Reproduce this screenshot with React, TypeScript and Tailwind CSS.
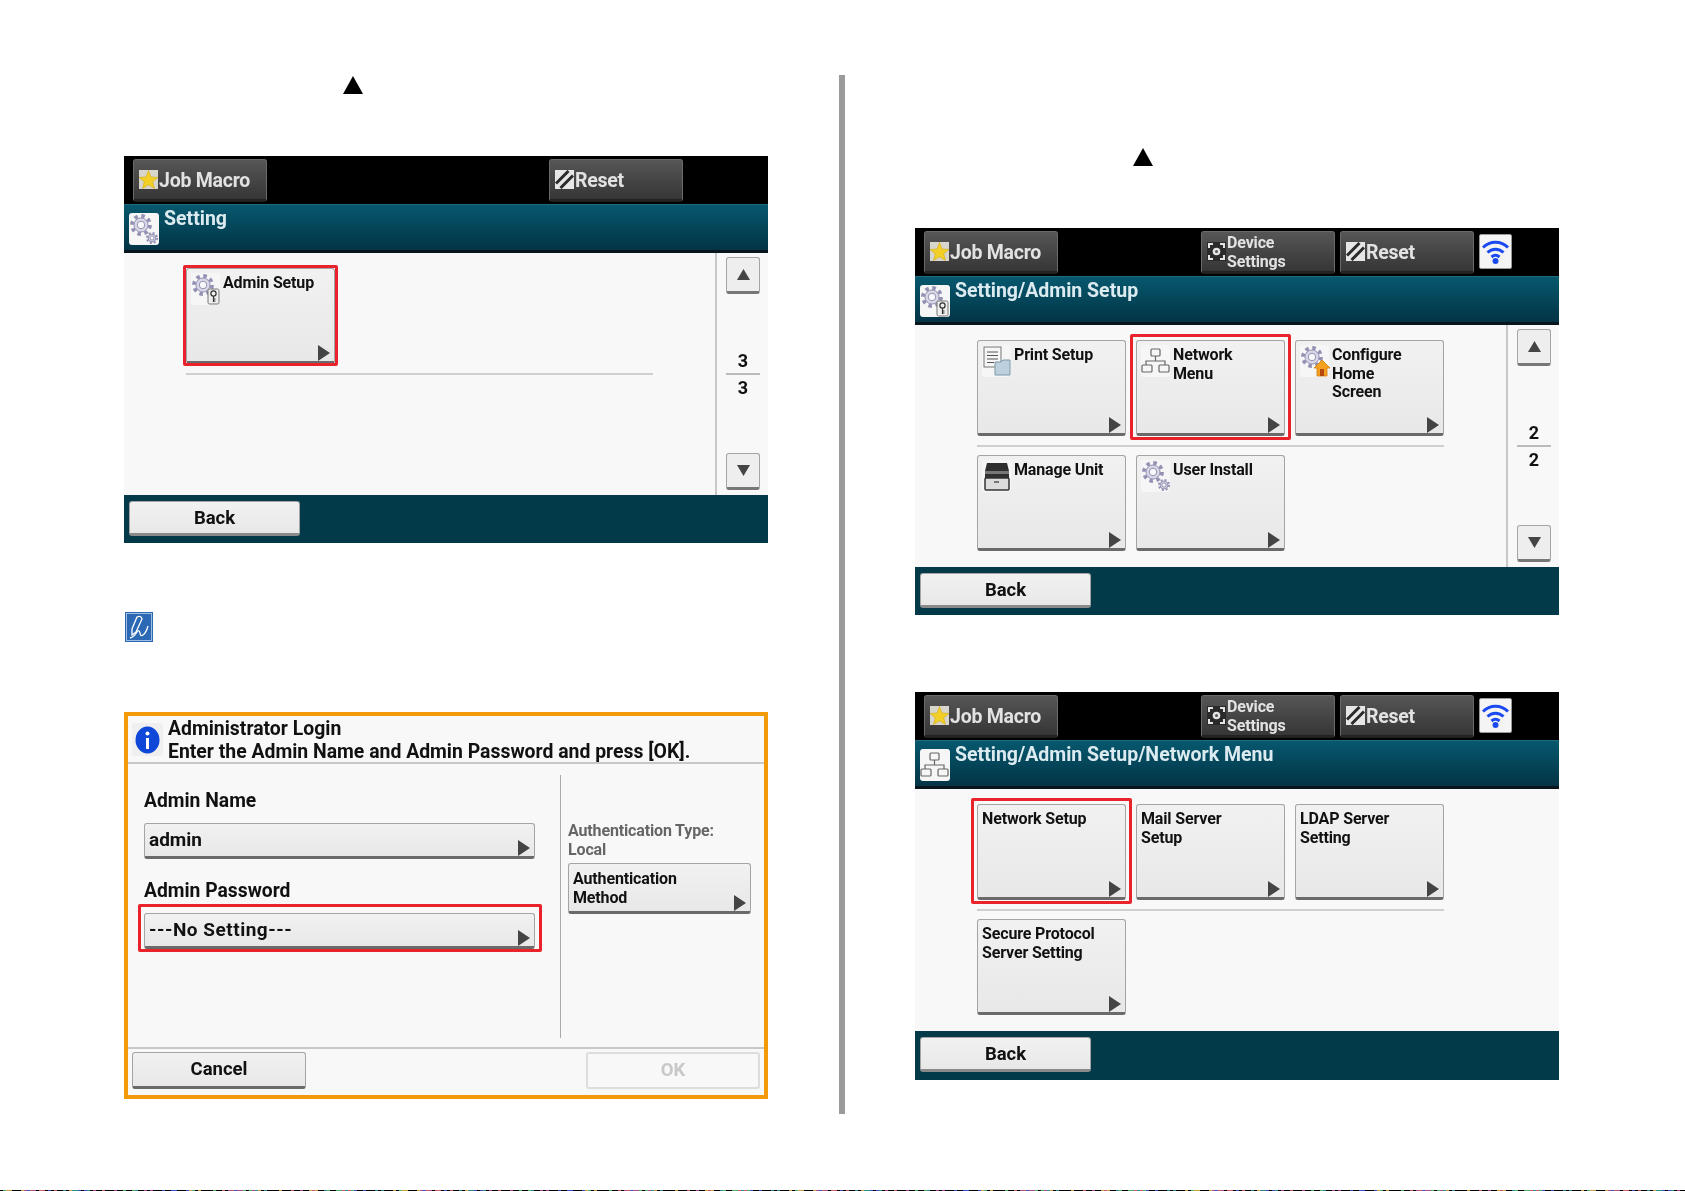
import React from 'react';

const Arrow = () => (
  <svg className="absolute right-[3px] bottom-0" width="14" height="16" viewBox="0 0 14 16">
    <polygon points="1,0 13,8 1,16" fill="#444" />
  </svg>
);

const Gear = ({ cx, cy, r, color = '#9492b4' }: { cx: number; cy: number; r: number; color?: string }) => {
  const tooth = (2 * Math.PI * r) / 16;
  return (
    <g>
      <circle cx={cx} cy={cy} r={r} fill="none" stroke={color} strokeWidth={r * 0.42} strokeDasharray={`${tooth} ${tooth}`} />
      <circle cx={cx} cy={cy} r={r * 0.78} fill="#d9d8e6" stroke={color} strokeWidth="1" />
      <circle cx={cx} cy={cy} r={r * 0.42} fill="#f8f8fa" stroke={color} strokeWidth="1" />
    </g>
  );
};

const KeyBadge = () => (
  <g>
    <rect x="17" y="16" width="11" height="15" rx="1.5" fill="#eee" stroke="#777" />
    <circle cx="22.5" cy="20.5" r="2.6" fill="none" stroke="#333" strokeWidth="1.2" />
    <path d="M22.5 23v6m0-3h2m-2 2h2" stroke="#333" strokeWidth="1.2" fill="none" />
  </g>
);

const NetworkGlyph = () => (
  <g fill="none" stroke="#666" strokeWidth="1.2">
    <rect x="10" y="4" width="9" height="7" rx="1" />
    <path d="M14.500 11v5M5 20v-4h19v4" />
    <rect x="1" y="20" width="10" height="7" rx="1" />
    <rect x="18" y="20" width="10" height="7" rx="1" />
  </g>
);

const tileIcons: Record<string, React.ReactNode> = {
  gears: (
    <>
      <Gear cx={12} cy={12} r={9} />
      <Gear cx={23} cy={25} r={5} />
    </>
  ),
  adminSetup: (
    <>
      <Gear cx={12} cy={12} r={9} />
      <KeyBadge />
    </>
  ),
  network: <NetworkGlyph />,
  print: (
    <>
      <rect x="2" y="2" width="17" height="20" fill="#f6f6f6" stroke="#777" />
      <path d="M5 7h11M5 10.500h11M5 14h11M5 17.500h7" stroke="#555" strokeWidth="1.2" />
      <path d="M13 17h6l2-2h7v15H13z" fill="#bcd0dd" stroke="#7d98a8" />
    </>
  ),
  manage: (
    <>
      <path d="M5 3h20l2 8v9H3v-9z" fill="#2f2f2f" />
      <rect x="3" y="11" width="24" height="3" fill="#777" />
      <rect x="3" y="18" width="24" height="12" rx="1" fill="#dcdcdc" stroke="#333" strokeWidth="1.5" />
      <rect x="12" y="21" width="5" height="2" fill="#777" />
    </>
  ),
  home: (
    <>
      <Gear cx={12} cy={12} r={9} />
      <path d="M14 23l8-8 8 8h-3v8H17v-8z" fill="#f4a11f" stroke="#d07f10" strokeWidth="0.8" />
      <rect x="20" y="24" width="4" height="7" fill="#b5480f" />
    </>
  ),
  userInstall: (
    <>
      <Gear cx={12} cy={12} r={9} />
      <Gear cx={23} cy={25} r={5} />
    </>
  ),
};

const TileIcon = ({ name }: { name: string }) => (
  <div className="w-[29px] h-[32px] shrink-0 rounded-[3px] bg-[#f6f6f6]">
    <svg width="30" height="33" viewBox="0 0 30 33">{tileIcons[name]}</svg>
  </div>
);

const StarIcon = () => (
  <svg width="19" height="19" viewBox="0 0 19 19" className="shrink-0">
    <rect width="19" height="19" fill="#d8d6cc" />
    <polygon points="9.500,0.500 12,7 19,7.400 13.700,11.700 15.500,18.500 9.500,14.800 3.500,18.500 5.300,11.700 0,7.400 7,7" fill="#f2d027" stroke="#d2a912" strokeWidth="0.6" />
  </svg>
);

const ResetIcon = () => (
  <svg width="19" height="19" viewBox="0 0 19 19" className="shrink-0">
    <rect width="19" height="19" fill="#e6e6e6" />
    <path d="M1 13.500L13.500 1M5.500 18L18 5.500" stroke="#2a2a2a" strokeWidth="3" />
  </svg>
);

const DeviceIcon = () => (
  <svg width="19" height="19" viewBox="0 0 19 19" className="shrink-0">
    <rect width="19" height="19" fill="#2a2a2a" />
    <path d="M2 6V2h4M13 2h4v4M17 13v4h-4M6 17H2v-4" stroke="#e4e4e4" strokeWidth="2" fill="none" />
    <circle cx="9.500" cy="9.500" r="3.800" fill="#e4e4e4" />
    <circle cx="9.500" cy="9.500" r="1.500" fill="#555" />
  </svg>
);

const WifiIcon = () => (
  <div className="w-[33px] h-[35px] mt-[3px] ml-[5px] rounded-[2px] bg-[#f4f4f4] border border-[#999]">
    <svg width="31" height="33" viewBox="0 0 31 33">
      <path d="M3 12.500C10 5.500 21 5.500 28 12.500M7.500 17.500C12 13 19 13 23.500 17.500M11.500 22C14 19.800 17 19.800 19.500 22" stroke="#1a49f0" strokeWidth="3" fill="none" />
      <circle cx="15.500" cy="26" r="3" fill="#1a49f0" />
    </svg>
  </div>
);

const DarkButton = ({ icon, children, className = '' }: { icon: React.ReactNode; children: React.ReactNode; className?: string }) => (
  <div className={`w-[134px] h-[43px] flex items-center gap-[1px] pl-[5px] rounded-[3px] border border-[#6a6a6a] border-b-[3px] border-b-[#222] bg-linear-to-b from-[#565656] to-[#363636] text-[#e2e2e2] font-bold ${className}`}>
    {icon}
    {children}
  </div>
);

const LightButton = ({ children, className = '' }: { children: React.ReactNode; className?: string }) => (
  <div className={`relative flex rounded-[3px] border border-[#a4a4a4] border-b-[3px] border-b-[#6a6a6a] bg-linear-to-b from-[#f1f1f1] to-[#e8e8e8] text-[#111] font-bold ${className}`}>
    {children}
  </div>
);

type TileData = { label: string[]; icon?: string; red?: 'wide' | 'tight' };

const Tile = ({ label, icon, red }: TileData) => (
  <LightButton className="w-[149px] h-[96px] text-[16px] leading-[18.500px] tracking-[-0.15px]">
    {icon ? (
      <div className="flex gap-[3px] pl-[4px] pt-[4px]">
        <TileIcon name={icon} />
        <div className="pt-[1px]">{label.map((l) => <div key={l}>{l}</div>)}</div>
      </div>
    ) : (
      <div className="pl-[4px] pt-[5px]">{label.map((l) => <div key={l}>{l}</div>)}</div>
    )}
    <Arrow />
    {red === 'wide' && <span className="absolute -left-[7px] -top-[7px] -right-[7px] -bottom-[7px] border-[3px] border-[#e8232c] rounded-[2px]" />}
    {red === 'tight' && <span className="absolute -left-[4px] -top-[4px] -right-[4px] -bottom-[5px] border-[3px] border-[#e8232c] rounded-[2px]" />}
  </LightButton>
);

const ScrollButton = ({ up }: { up?: boolean }) => (
  <div className="w-[34px] h-[37px] flex items-center justify-center rounded-[3px] border border-[#a4a4a4] border-b-[3px] border-b-[#777] bg-[#eeeeee]">
    <svg width="13" height="11" viewBox="0 0 13 11">
      <polygon points={up ? '6.500,0 13,11 0,11' : '0,0 13,0 6.500,11'} fill="#444" />
    </svg>
  </div>
);

const Screen = ({ title, icon, wide, page, tall, rows }: { title: string; icon: string; wide?: boolean; page?: string; tall?: boolean; rows: TileData[][] }) => (
  <div className={`w-[644px] flex flex-col blur-[0.6px] ${tall ? 'h-[388px]' : 'h-[387px]'}`}>
    <div className="h-[48px] bg-black flex pl-[9px] pt-[3px] text-[19.500px] tracking-[-0.25px]">
      <DarkButton icon={<StarIcon />}><span className="pt-[2px]">Job Macro</span></DarkButton>
      {wide ? (
        <DarkButton icon={<DeviceIcon />} className="ml-[143px] text-[16px] leading-[18.500px] tracking-[-0.15px]">
          <div className="pt-[2px]">
            <div>Device</div>
            <div>Settings</div>
          </div>
        </DarkButton>
      ) : (
        <div className="w-[134px] ml-[143px]" />
      )}
      <DarkButton icon={<ResetIcon />} className="ml-[5px]"><span className="pt-[2px]">Reset</span></DarkButton>
      {wide && <WifiIcon />}
    </div>
    <div className="h-[49px] flex gap-[5px] pl-[5px] pt-[8px] border-t border-[#1d6a7e] border-b-[3px] border-b-[#06161c] bg-linear-to-b from-[#07586e] to-[#033446] text-[#dcebf0] text-[19.500px] leading-[18px] font-bold">
      <div className="w-[30px] h-[32px] shrink-0 rounded-[3px] bg-[#f6f6f6]">
        <svg width="30" height="33" viewBox="0 0 30 33">{tileIcons[icon]}</svg>
      </div>
      <div className="-mt-[3px]">{title}</div>
    </div>
    <div className="h-[242px] flex bg-[#f8f8f8] text-[#111]">
      <div className="w-[591px] pl-[62px] pt-[15px]">
        {rows.map((row, i) => (
          <div key={i}>
            <div className="flex gap-[10px]">
              {row.map((t) => <Tile key={t.label.join()} {...t} />)}
            </div>
            {i === 0 && <div className="w-[467px] h-[2px] mt-[9px] mb-[8px] bg-[#cfcfcf]" />}
          </div>
        ))}
      </div>
      {page && (
        <div className="w-[53px] border-l-2 border-[#c8c8c8] flex flex-col items-center justify-between pl-[1px] pt-[4px] pb-[5px]">
          <ScrollButton up />
          <div className="w-[34px] flex flex-col items-center text-[18px] leading-[25px] font-bold">
            <div className="w-full text-center border-b-2 border-[#bbb]">{page}</div>
            <div>{page}</div>
          </div>
          <ScrollButton />
        </div>
      )}
    </div>
    <div className="flex-1 bg-[#033a4a] pl-[5px] pt-[6px]">
      <LightButton className="w-[171px] h-[35px] items-center justify-center pt-[3px] text-[18.500px] !border-b-[#8a8a8a]">Back</LightButton>
    </div>
  </div>
);

const NoteIcon = () => (
  <svg width="28" height="30" viewBox="0 0 28 30" className="ml-px mt-[69px] blur-[0.3px]">
    <rect width="28" height="30" fill="#2b69b5" />
    <rect x="1.500" y="1.500" width="25" height="27" fill="none" stroke="#bcd2ec" strokeWidth="0.800" />
    <path d="M12 5Q16 3 17 7L11 20L7 23L7 17Z" stroke="#fff" strokeWidth="1.300" fill="none" />
    <path d="M5 26Q9 25 12 20Q14 17 15 21Q15.500 25 18 23Q21 21 23 14" stroke="#fff" strokeWidth="1.300" fill="none" />
  </svg>
);

const LoginField = ({ children }: { children: React.ReactNode }) => (
  <LightButton className="w-[391px] h-[36px] items-center pl-[4px] text-[19px]">
    {children}
    <Arrow />
  </LightButton>
);

const LoginDialog = () => (
  <div className="w-[644px] h-[387px] mt-[70px] flex flex-col border-4 border-[#f39a0a] bg-[#f8f8f8] text-[#111] font-bold blur-[0.6px]">
    <div className="h-[48px] shrink-0 flex gap-[5px] pl-[4px] border-b-2 border-[#c8c8c8] text-[19.400px] leading-[22.500px]">
      <div className="w-[31px] h-[33px] mt-[7px] shrink-0 rounded-[3px] bg-[#efefef] flex items-center justify-center">
        <svg width="25" height="28" viewBox="0 0 25 28">
          <ellipse cx="12.500" cy="14" rx="12" ry="13.500" fill="#0f47d8" />
          <rect x="11" y="12" width="3" height="11" fill="#fff" />
          <circle cx="12.500" cy="7.500" r="2" fill="#fff" />
        </svg>
      </div>
      <div className="pt-[2px]">
        <div>Administrator Login</div>
        <div>Enter the Admin Name and Admin Password and press [OK].</div>
      </div>
    </div>
    <div className="flex-1 flex">
      <div className="w-[432px] pl-[16px] pt-[26px] text-[19.300px] leading-[22px]">
        <div>Admin Name</div>
        <div className="mt-[11px]"><LoginField>admin</LoginField></div>
        <div className="mt-[21px]">Admin Password</div>
        <div className="relative mt-[11px] w-[391px]">
          <LoginField><span className="tracking-[0.5px]">---No Setting---</span></LoginField>
          <span className="absolute -left-[6px] -top-[9px] -right-[7px] -bottom-[3px] border-[3px] border-[#e8232c] rounded-[2px]" />
        </div>
      </div>
      <div className="mt-[11px] mb-[9px] w-px bg-[#aaa]" />
      <div className="pl-[7px] pt-[58px]">
        <div className="text-[16px] leading-[18.500px] tracking-[-0.15px] text-[#666]">
          <div>Authentication Type:</div>
          <div>Local</div>
        </div>
        <LightButton className="w-[183px] h-[51px] mt-[4px] pl-[4px] pt-[6px] text-[16px] leading-[18.500px] tracking-[-0.15px]">
          <div>
            <div>Authentication</div>
            <div>Method</div>
          </div>
          <Arrow />
        </LightButton>
      </div>
    </div>
    <div className="h-[48px] shrink-0 flex justify-between px-[4px] pt-[3px] border-t-2 border-[#c8c8c8] text-[18.500px]">
      <LightButton className="w-[174px] h-[37px] items-center justify-center">Cancel</LightButton>
      <div className="w-[174px] h-[37px] flex items-center justify-center rounded-[3px] border-2 border-[#dddddd] text-[#c8c8c8]">OK</div>
    </div>
  </div>
);

const Triangle = ({ className }: { className: string }) => (
  <svg width="20" height="18" viewBox="0 0 20 18" className={className}>
    <polygon points="10,0 20,18 0,18" fill="#000" />
  </svg>
);

// last pixel row of the scan: black with stray coloured pixels
const stripColors = ['#000', '#000', '#000', '#000', '#2a8f8a', '#b0478f', '#c9a03a', '#3d4fd0', '#4ab56a', '#000', '#000', '#d05a6a'];
const stripSegments = Array.from({ length: 560 }, (_, i) => stripColors[(i * 7 + ((i * i) % 11)) % stripColors.length]);

const NoiseStrip = () => (
  <div className="h-px flex bg-black">
    {stripSegments.map((c, i) => (
      <span key={i} className="w-[3px] h-px" style={{ background: c }} />
    ))}
  </div>
);

export default function App() {
  return (
    <div className="w-[1685px] h-[1191px] flex flex-col bg-white overflow-hidden font-['Roboto',sans-serif]">
      <div className="flex-1 flex pl-[124px]">
        <div className="w-[644px] pt-[76px]">
          <Triangle className="ml-[219px]" />
          <div className="mt-[62px]">
            <Screen
              title="Setting"
              icon="gears"
              page="3"
              rows={[[{ label: ['Admin Setup'], icon: 'adminSetup', red: 'tight' }]]}
            />
          </div>
          <NoteIcon />
          <LoginDialog />
        </div>
        <div className="w-[6px] h-[1039px] mt-[75px] ml-[71px] bg-[#9a9a9a]" />
        <div className="w-[644px] ml-[70px] pt-[148px]">
          <Triangle className="ml-[218px]" />
          <div className="mt-[62px]">
            <Screen
              title="Setting/Admin Setup"
              icon="adminSetup"
              wide
              page="2"
              rows={[
                [
                  { label: ['Print Setup'], icon: 'print' },
                  { label: ['Network', 'Menu'], icon: 'network', red: 'wide' },
                  { label: ['Configure', 'Home', 'Screen'], icon: 'home' },
                ],
                [
                  { label: ['Manage Unit'], icon: 'manage' },
                  { label: ['User Install'], icon: 'userInstall' },
                ],
              ]}
            />
          </div>
          <div className="mt-[77px]">
            <Screen
              title="Setting/Admin Setup/Network Menu"
              icon="network"
              wide
              tall
              rows={[
                [
                  { label: ['Network Setup'], red: 'wide' },
                  { label: ['Mail Server', 'Setup'] },
                  { label: ['LDAP Server', 'Setting'] },
                ],
                [{ label: ['Secure Protocol', 'Server Setting'] }],
              ]}
            />
          </div>
        </div>
      </div>
      <NoiseStrip />
    </div>
  );
}
